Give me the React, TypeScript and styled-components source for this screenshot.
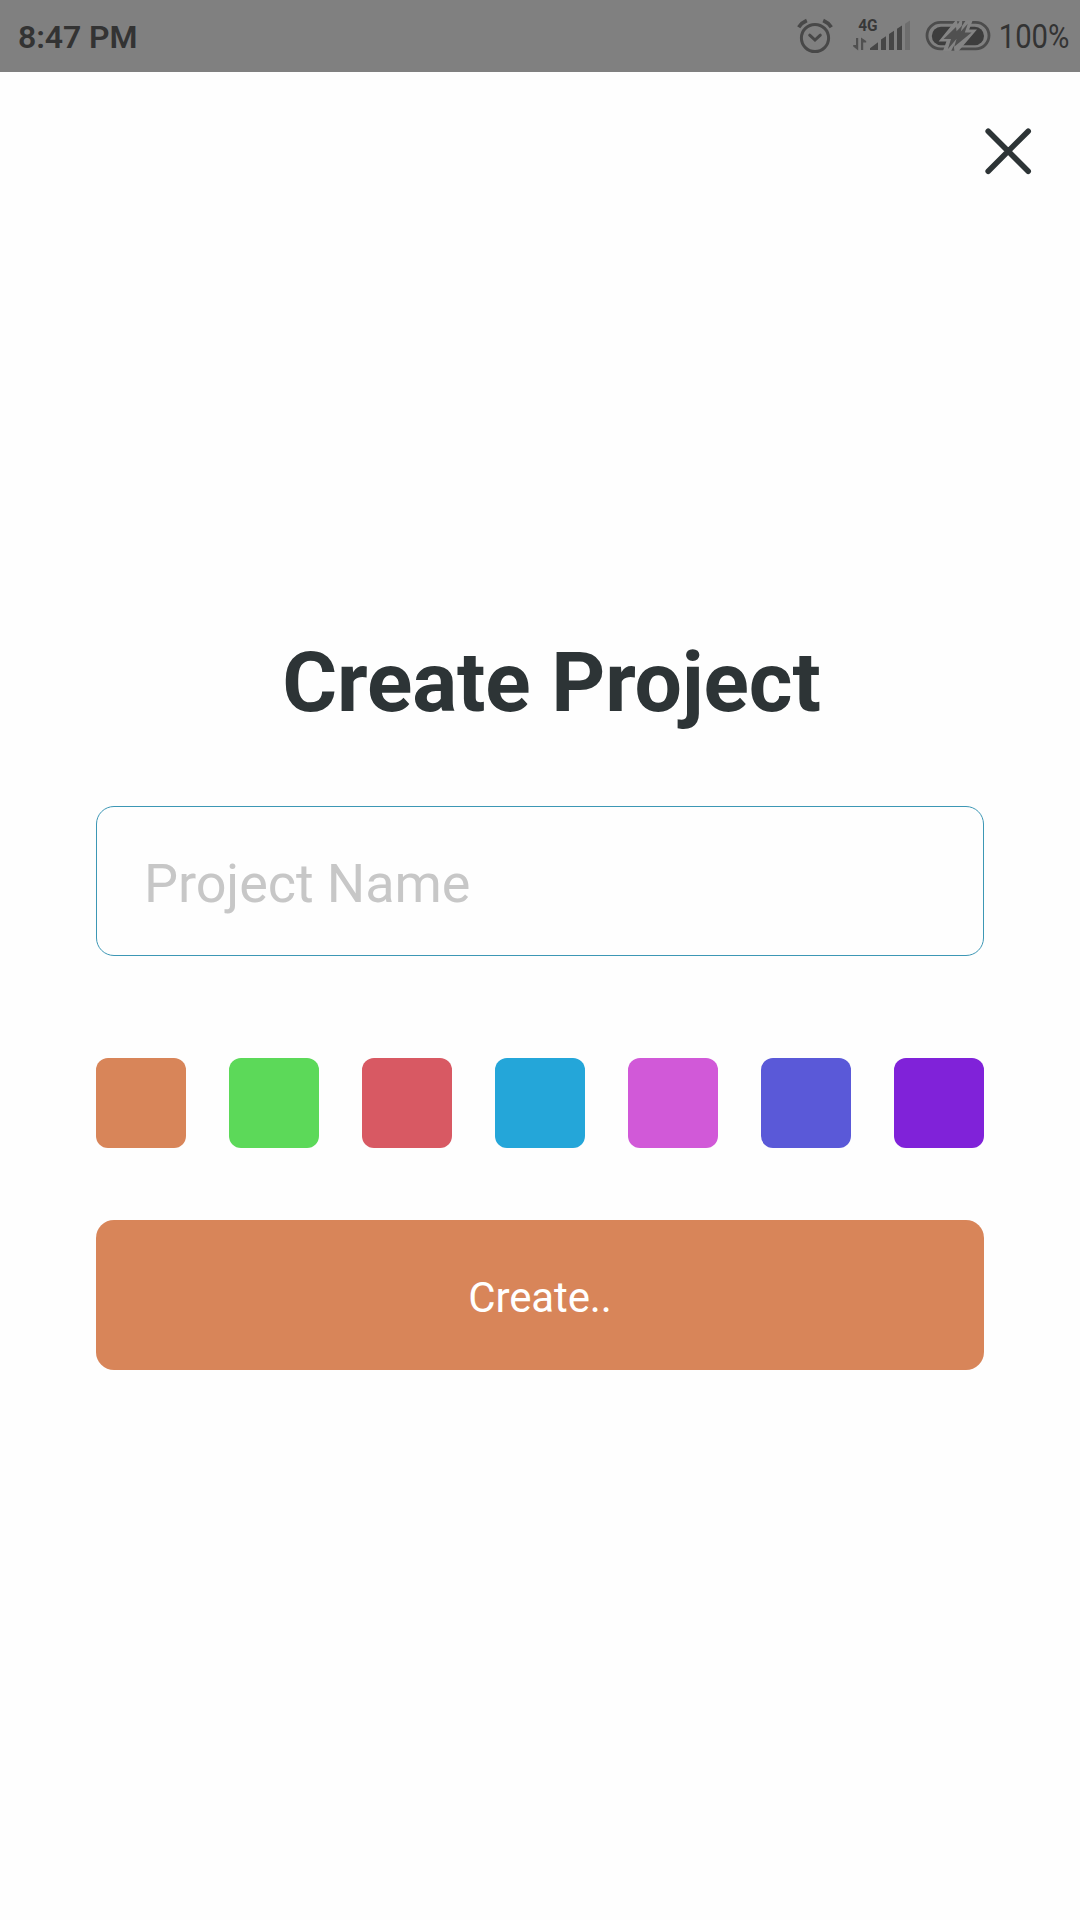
import React, { useState } from "react";
import styled, { createGlobalStyle } from "styled-components";

const GlobalStyle = createGlobalStyle`
  * { box-sizing: border-box; }
  body {
    margin: 0;
    background: #fefefe;
    font-family: Roboto, "Noto Sans", sans-serif;
  }
`;

const Screen = styled.div`
  display: flex;
  flex-direction: column;
  width: 1080px;
  height: 1920px;
  background: #fefefe;
  overflow: hidden;
`;

const StatusBar = styled.header`
  display: flex;
  align-items: flex-start;
  justify-content: space-between;
  height: 72px;
  flex: none;
  padding: 0 10px 0 18px;
  background: #808080;
  color: #333333;
`;

const Clock = styled.span`
  font-size: 32px;
  font-weight: 600;
  letter-spacing: -0.1px;
  line-height: 74px;
  white-space: nowrap;
`;

const StatusIcons = styled.div`
  display: flex;
  height: 72px;
`;

const Battery = styled.span`
  width: 73px;
  padding-left: 2px;
  font-size: 33.5px;
  font-weight: 450;
  line-height: 73px;
  white-space: nowrap;
  transform: scaleX(0.872);
  transform-origin: 0 50%;
`;

const TopRow = styled.div`
  display: flex;
  justify-content: flex-end;
  padding: 54px 46px 0 0;
`;

const CloseButton = styled.button`
  display: flex;
  width: 52px;
  height: 52px;
  padding: 0;
  border: 0;
  background: none;
`;

const Form = styled.main`
  display: flex;
  flex-direction: column;
  padding: 456px 96px 0;
`;

const Title = styled.h1`
  margin: 0 0 74px 23px;
  color: #2d3436;
  font-size: 84px;
  font-weight: 700;
  letter-spacing: -0.14px;
  line-height: 98px;
  text-align: center;
  white-space: nowrap;
`;

const NameInput = styled.input`
  width: 100%;
  height: 150px;
  padding: 5px 47px 0;
  border: 1px solid #3d97b5;
  border-radius: 18px;
  outline: none;
  background: #fefefe;
  color: #2d3436;
  font-family: inherit;
  font-size: 54px;
  letter-spacing: -0.09px;

  &::placeholder {
    color: #c7c7c7;
    opacity: 1;
  }
`;

const Swatches = styled.div`
  display: flex;
  justify-content: space-between;
  margin: 102px 0 72px;
`;

const Swatch = styled.button<{ $color: string }>`
  width: 90px;
  height: 90px;
  padding: 0;
  border: 0;
  border-radius: 12px;
  background: ${(p) => p.$color};
`;

const CreateButton = styled.button<{ $color: string }>`
  height: 150px;
  padding: 5px 0 0;
  border: 0;
  border-radius: 18px;
  background: ${(p) => p.$color};
  color: #ffffff;
  font-family: inherit;
  font-size: 42px;
  letter-spacing: -0.1px;
`;

const COLORS = ["#d88559", "#5cd959", "#d85963", "#24a6d9", "#d159d8", "#5a59d8", "#8022d9"];

function StatusGlyphs() {
  return (
    <svg width="202" height="72" viewBox="795 0 202 72">
      <g fill="none" stroke="#484848" strokeWidth="3">
        <circle cx="815" cy="38" r="13.6" />
        <path d="M809.7 35.2l5.3 4.8 5.3-4.8" strokeLinecap="round" />
        <path d="M798.7 27.2Q801.6 22.8 806.8 20.6M831.3 27.2Q828.4 22.8 823.2 20.6" strokeWidth="3.8" />
      </g>
      <text
        x="858.2"
        y="31"
        fill="#383838"
        fontFamily="Roboto, sans-serif"
        fontSize="16"
        fontWeight="700"
        textLength="19.4"
        lengthAdjust="spacingAndGlyphs"
      >
        4G
      </text>
      <g fill="#505050">
        <path d="M856 38h2.2v12.4L853.2 46.4V45H856zM861 50h2.2v-7.6h3V41L861 37.6z" />
        <path d="M870 50v-1.8l8-6V50zM881 50V39.5l5-3.2V50zM889 50V34l5-3.2V50zM897 50V28.8l5-3.2V50z" fill="#464646" />
        <path d="M905 50V23.8l5-3.2V50z" fill="#6e6e6e" />
      </g>
      <rect x="927" y="22.3" width="62" height="26.6" rx="13.3" fill="none" stroke="#4c4c4c" strokeWidth="2.8" />
      <rect x="931.8" y="26.8" width="52.2" height="18.4" rx="9.2" fill="#3d3d3d" />
      <path d="M955.5 20.5L938.6 41.4h7.8L943 51h15.6L977 29.6h-7.8l3.4-9.1z" fill="#848484" />
      <path
        d="M956 27L943.6 39h7.4l-3.2 10.2 8.8-10.4-2.4 8L971.6 32.4h-6.8l3-8.6-7 7.8 1.4-6-5.6 5.6z"
        fill="#505050"
      />
      <path d="M956.8 21.2h2.8l-1.8 3zM962.2 21h3.2l-3.6 5.2zM951.2 50.8l2.6-5 .6 5z" fill="#505050" />
    </svg>
  );
}

export default function App() {
  const [name, setName] = useState("");
  const [color, setColor] = useState(COLORS[0]);

  return (
    <Screen>
      <GlobalStyle />
      <StatusBar>
        <Clock>8:47 PM</Clock>
        <StatusIcons>
          <StatusGlyphs />
          <Battery>100%</Battery>
        </StatusIcons>
      </StatusBar>
      <TopRow>
        <CloseButton aria-label="Close">
          <svg width="52" height="52" viewBox="0 0 52 52" fill="none" stroke="#2d3436" strokeWidth="5.6" strokeLinecap="round">
            <path d="M6.2 5.2L46.2 45.2M46.2 5.2L6.2 45.2" />
          </svg>
        </CloseButton>
      </TopRow>
      <Form>
        <Title>Create Project</Title>
        <NameInput placeholder="Project Name" value={name} onChange={(e) => setName(e.target.value)} />
        <Swatches>
          {COLORS.map((c) => (
            <Swatch key={c} $color={c} aria-label={c} onClick={() => setColor(c)} />
          ))}
        </Swatches>
        <CreateButton $color={color}>Create..</CreateButton>
      </Form>
    </Screen>
  );
}
